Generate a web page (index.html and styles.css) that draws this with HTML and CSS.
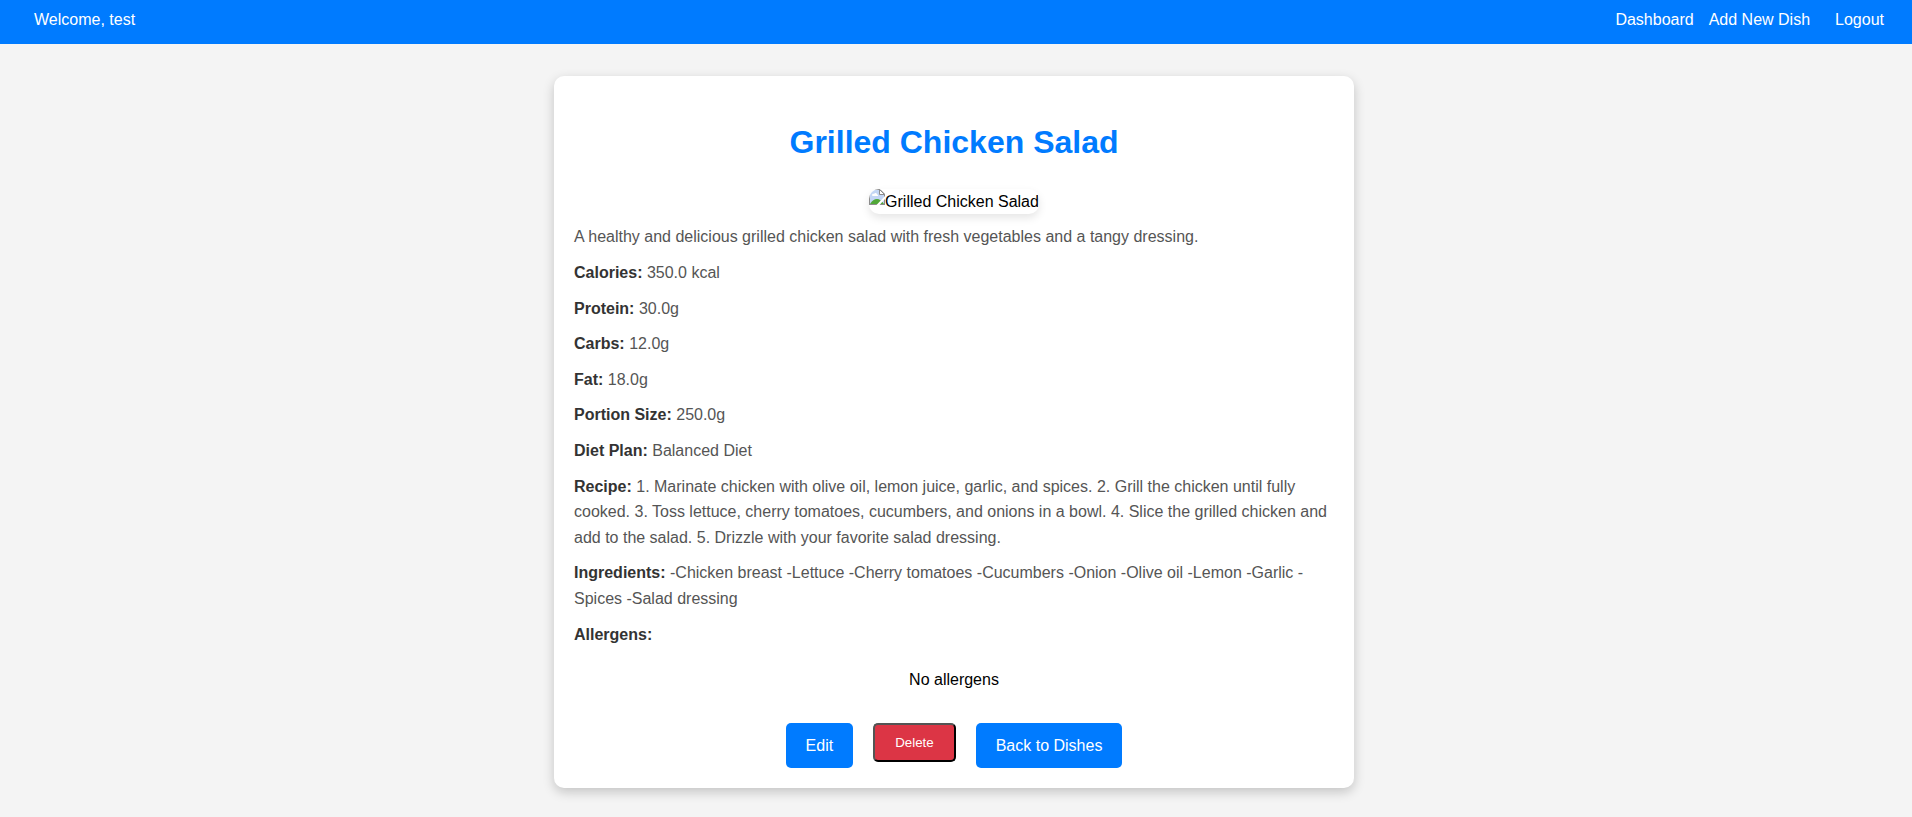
FILE: index.html
```html
<!DOCTYPE html>
<html lang="en">
<head>
<meta charset="utf-8">
<meta name="viewport" content="width=device-width, initial-scale=1">
<title>Grilled Chicken Salad</title>
<link rel="stylesheet" href="styles.css">
</head>
<body>
<header class="navbar">
  <span class="welcome">Welcome, test</span>
  <nav class="nav-links">
    <a href="#">Dashboard</a>
    <a href="#">Add New Dish</a>
    <a class="logout" href="#">Logout</a>
  </nav>
</header>
<main class="page">
<article class="dish-card">
  <h1 class="dish-title">Grilled Chicken Salad</h1>
  <div class="dish-image">
    <svg class="missing-icon" width="16" height="16" viewBox="0 0 16 16" aria-hidden="true">
      <path d="M1 1h10l4 4v10H1z" fill="#c3d6f5"/>
      <path d="M3 6.500c0-1.500 1-2 2-1.500.5-1.500 3-1.500 3 .5 1.500 0 1.500 1.500.5 1.500H4z" fill="#fff"/>
      <path d="M1 15c2-3.500 4.500-5 7-5s5 2 7 5z" fill="#51a838"/>
      <path d="M.5 16V.5H11L15.500 5v11M0 15.500h16" fill="none" stroke="#8c8c8c"/>
      <path d="M10.500.5V5.500h5z" fill="#fff" stroke="#8c8c8c"/>
      <path d="M16 7v3l-5.500 6H7.500z" fill="#fff"/>
    </svg>
    <span>Grilled Chicken Salad</span>
  </div>
  <p class="detail">A healthy and delicious grilled chicken salad with fresh vegetables and a tangy dressing.</p>
  <p class="detail"><strong>Calories:</strong> 350.0 kcal</p>
  <p class="detail"><strong>Protein:</strong> 30.0g</p>
  <p class="detail"><strong>Carbs:</strong> 12.0g</p>
  <p class="detail"><strong>Fat:</strong> 18.0g</p>
  <p class="detail"><strong>Portion Size:</strong> 250.0g</p>
  <p class="detail"><strong>Diet Plan:</strong> Balanced Diet</p>
  <p class="detail"><strong>Recipe:</strong> 1. Marinate chicken with olive oil, lemon juice, garlic, and spices. 2. Grill the chicken until fully cooked. 3. Toss lettuce, cherry tomatoes, cucumbers, and onions in a bowl. 4. Slice the grilled chicken and add to the salad. 5. Drizzle with your favorite salad dressing.</p>
  <p class="detail"><strong>Ingredients:</strong> -Chicken breast -Lettuce -Cherry tomatoes -Cucumbers -Onion -Olive oil -Lemon -Garlic -Spices -Salad dressing</p>
  <p class="detail"><strong>Allergens:</strong></p>
  <ul class="allergens">
    <li>No allergens</li>
  </ul>
  <div class="actions">
    <a class="btn" href="#">Edit</a>
    <button class="btn btn-delete" type="button">Delete</button>
    <a class="btn" href="#">Back to Dishes</a>
  </div>
</article>
</main>
</body>
</html>
```

FILE: styles.css
```css
body {
  margin: 0;
  background: #f4f4f4;
  color: #000;
  font-family: "Liberation Sans", Arial, sans-serif;
  font-size: 16px;
  line-height: 1.6;
}

.navbar {
  display: flex;
  justify-content: space-between;
  padding: 7px 28px 11px 34px;
  background: #007bff;
  color: #fff;
}

.nav-links {
  display: flex;
  gap: 15px;
}

.nav-links a {
  color: #fff;
  text-decoration: none;
}

.nav-links .logout {
  margin-left: 10px;
}

.page {
  padding: 32px 24px 28px 20px;
}

.dish-card {
  box-sizing: border-box;
  max-width: 800px;
  margin: 0 auto;
  padding: 20px;
  background: #fff;
  border-radius: 10px;
  box-shadow: 0 4px 12px rgba(0, 0, 0, 0.2);
}

.dish-title {
  margin: 21px 0;
  color: #007bff;
  font-size: 32px;
  text-align: center;
}

.dish-image {
  display: flex;
  align-items: flex-start;
  width: fit-content;
  margin: 0 auto 10px;
  border-radius: 10px;
  overflow: hidden;
  box-shadow: 0 4px 8px rgba(0, 0, 0, 0.1);
}

.missing-icon {
  flex: none;
}

.detail {
  margin: 0 0 10px;
  color: #555;
}

.detail strong {
  color: #333;
}

.allergens {
  margin: 20px 0 30px;
  padding: 0;
  list-style: none;
  text-align: center;
}

.actions {
  display: flex;
  justify-content: center;
  align-items: flex-start;
  gap: 20px;
}

.btn {
  padding: 10px 20px;
  border-radius: 5px;
  background: #007bff;
  color: #fff;
  text-decoration: none;
}

.btn-delete {
  border: 2px outset #000;
  background: #dc3545;
  font-family: inherit;
}
```
